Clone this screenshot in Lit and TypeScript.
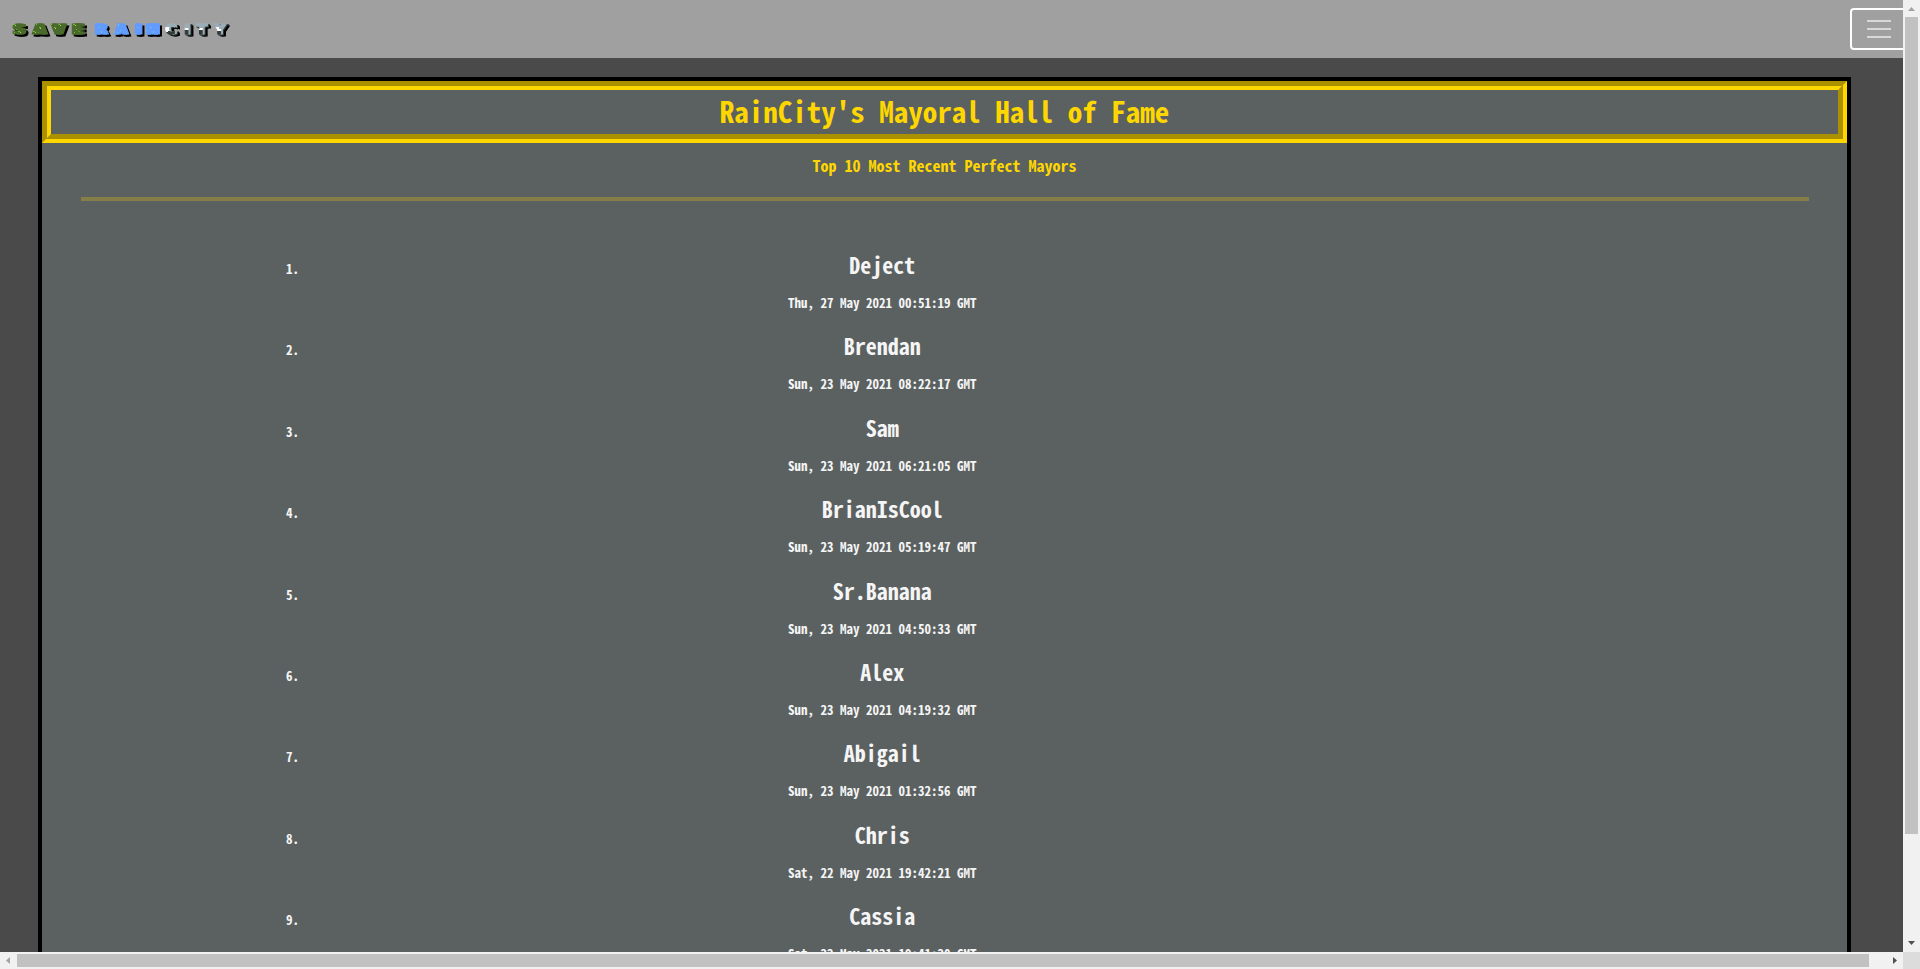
import { LitElement, html, css } from "lit";
import { customElement } from "lit/decorators.js";

interface Mayor {
  name: string;
  date: string;
}

const MAYORS: Mayor[] = [
  { name: "Deject", date: "Thu, 27 May 2021 00:51:19 GMT" },
  { name: "Brendan", date: "Sun, 23 May 2021 08:22:17 GMT" },
  { name: "Sam", date: "Sun, 23 May 2021 06:21:05 GMT" },
  { name: "BrianIsCool", date: "Sun, 23 May 2021 05:19:47 GMT" },
  { name: "Sr.Banana", date: "Sun, 23 May 2021 04:50:33 GMT" },
  { name: "Alex", date: "Sun, 23 May 2021 04:19:32 GMT" },
  { name: "Abigail", date: "Sun, 23 May 2021 01:32:56 GMT" },
  { name: "Chris", date: "Sat, 22 May 2021 19:42:21 GMT" },
  { name: "Cassia", date: "Sat, 22 May 2021 19:41:20 GMT" },
];

@customElement("site-logo")
class SiteLogo extends LitElement {
  static styles = css`
    :host {
      display: block;
    }
    svg {
      display: block;
      width: 224px;
      height: 18px;
      overflow: visible;
    }
    text {
      font: bold 14px "DejaVu Sans", sans-serif;
      stroke-width: 1px;
      stroke-linejoin: miter;
    }
    .save {
      fill: url(#moss);
      stroke: url(#moss);
      filter: drop-shadow(2px 0 0 #4a6a2c) drop-shadow(3px 0 0 #4a6a2c) drop-shadow(2px 2px 0 #000);
    }
    .rain {
      fill: url(#water);
      stroke: url(#water);
      filter: drop-shadow(2px 0 0 #639bff) drop-shadow(2px 0 0 #639bff) drop-shadow(2px 2px 0 #000);
    }
    .city {
      fill: url(#snow);
      stroke: url(#snow);
      filter: drop-shadow(2px 0 0 #9badb7) drop-shadow(1px 1px 0 #323c39) drop-shadow(2px 1px 0 #000);
    }
  `;

  render() {
    return html`
      <svg viewBox="0 0 224 18" role="img" aria-label="Save Rain City">
        <defs>
          <pattern id="moss" width="15" height="11" y="3" patternUnits="userSpaceOnUse">
            <rect width="15" height="11" fill="#4a6a2c" />
            <path d="M1 1h2v1H1zM9 0h1v2H9zM12 4h2v1h-2zM4 6h1v1H4zM6 8h2v1H6zM2 9h1v1H2zM11 9h1v2h-1z" fill="#6abe30" />
            <path d="M3 2h1v1H3zM13 5h1v1h-1zM8 9h1v1H8z" fill="#99e550" />
          </pattern>
          <pattern id="water" width="13" height="11" y="3" patternUnits="userSpaceOnUse">
            <rect width="13" height="11" fill="#639bff" />
            <path d="M2 1h1v2H2zM8 4h2v1H8zM4 7h1v1H4zM11 8h1v2h-1zM1 9h2v1H1z" fill="#5fcde4" />
          </pattern>
          <pattern id="snow" width="24" height="14" y="2" patternUnits="userSpaceOnUse">
            <rect width="24" height="14" fill="#9badb7" />
            <path d="M0 5h5v1h4v-1h6v2h5v-1h4v8H0z" fill="#fff" />
            <path d="M0 9h4v-1h5v2h3v-1h6v-1h6v6H0z" fill="#323c39" />
          </pattern>
        </defs>
        <text class="save" x="0 20 39 59" y="14">SAVE</text>
        <text class="rain" x="82 102 122 133" y="14">RAIN</text>
        <text class="city" x="153 172 184 202" y="14">CITY</text>
      </svg>
    `;
  }
}

@customElement("scroll-track")
class ScrollTrack extends LitElement {
  static properties = { horizontal: { type: Boolean, reflect: true } };
  static styles = css`
    :host {
      display: grid;
      grid-template-rows: 17px minmax(0, 817fr) minmax(0, 101fr) 17px;
      background: #f1f1f1;
      box-sizing: border-box;
    }
    :host([horizontal]) {
      grid-template-rows: none;
      grid-template-columns: 17px minmax(0, 1852fr) minmax(0, 17fr) 17px;
    }
    .thumb {
      background: #c1c1c1;
      margin: 0 2px;
    }
    :host([horizontal]) .thumb {
      margin: 2px 0;
    }
    svg {
      display: block;
      width: 17px;
      height: 17px;
    }
    .off {
      fill: #a3a3a3;
    }
    .on {
      fill: #505050;
    }
  `;
  declare horizontal: boolean;

  render() {
    const back = this.horizontal ? "M10 5v7L6 8.500z" : "M5 11h7L8.500 7z";
    const next = this.horizontal ? "M7 5v7L11 8.500z" : "M5 6h7L8.500 10z";
    return html`
      <svg viewBox="0 0 17 17" aria-hidden="true"><path class="off" d=${back} /></svg>
      <div class="thumb"></div>
      <span></span>
      <svg viewBox="0 0 17 17" aria-hidden="true"><path class="on" d=${next} /></svg>
    `;
  }
}

@customElement("app-root")
class AppRoot extends LitElement {
  static styles = css`
    :host {
      display: grid;
      grid-template-columns: minmax(0, 1fr) 17px;
      grid-template-rows: minmax(0, 1fr) 17px;
      height: 100vh;
      overflow: hidden;
      background: #dcdcdc;
      font-family: "Noto Sans Mono CJK JP", "Noto Sans Mono CJK SC", "Liberation Mono", monospace;
      font-size: 13px;
      font-weight: bold;
    }
    .view {
      overflow: hidden;
      background: #4a4a4a;
    }
    .navbar {
      display: flex;
      align-items: center;
      justify-content: space-between;
      box-sizing: border-box;
      width: 100vw;
      padding: 8px 12px;
      background: #a0a0a0;
    }
    .toggler {
      display: grid;
      gap: 6px;
      padding: 10px 15px;
      border: 2px solid #fff;
      border-radius: 4px;
      background: none;
    }
    .toggler span {
      width: 24px;
      height: 2px;
      background: #d8d8d8;
    }
    .panel {
      margin: 19px 52px 0 38px;
      border: 4px solid #000;
      background: #5b6161;
      color: #f5f5f5;
      text-align: center;
    }
    h1 {
      margin: 0;
      padding-bottom: 4px;
      border: 9px groove #ffd700;
      color: #ffd700;
      font-size: 29px;
      line-height: 40px;
    }
    h2 {
      margin: 10px 0 20px;
      color: #ffd700;
      font-size: 16px;
      line-height: 24px;
    }
    hr {
      height: 4px;
      margin: 0 38px 0 39px;
      border: 0;
      background: #857e47;
    }
    ol {
      margin: 46px 21.5% 0 14.6%;
      padding: 0;
    }
    h3 {
      margin: 0 0 10px;
      font-size: 22px;
      line-height: 34px;
    }
    p {
      margin: 0 0 14px;
      line-height: 1.8;
    }
  `;

  render() {
    return html`
      <div class="view">
        <nav class="navbar">
          <a href="#" aria-label="Save Rain City"><site-logo></site-logo></a>
          <button class="toggler" aria-label="Toggle navigation">
            <span></span><span></span><span></span>
          </button>
        </nav>
        <main class="panel">
          <h1>RainCity's Mayoral Hall of Fame</h1>
          <h2>Top 10 Most Recent Perfect Mayors</h2>
          <hr />
          <ol>
            ${MAYORS.map(
              (m) => html`<li>
                <h3>${m.name}</h3>
                <p>${m.date}</p>
              </li>`
            )}
          </ol>
        </main>
      </div>
      <scroll-track></scroll-track>
      <scroll-track horizontal></scroll-track>
    `;
  }
}
